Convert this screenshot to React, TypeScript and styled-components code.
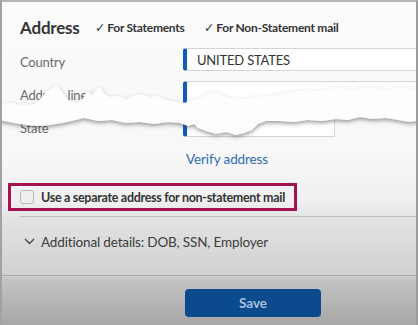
import React from "react";
import styled, { createGlobalStyle } from "styled-components";

const Global = createGlobalStyle`
  html, body { margin: 0; padding: 0; }
  body { font-family: Lato, "Open Sans", "DejaVu Sans", sans-serif; background: #a6a6a6; }
  * { box-sizing: border-box; }
`;

const Frame = styled.div`
  position: relative;
  width: 418px;
  height: 325px;
  overflow: hidden;
  border-left: 2px solid #a2a2a2;
  border-right: 2px solid #9c9c9c;
  border-top: 2px solid #b4b4b4;
  background: linear-gradient(
    to bottom,
    #fbfbfc 0px,
    #f8f8f9 150px,
    #efeff0 200px,
    #e3e3e3 216px,
    #d0d0d0 274px,
    #c4c4c4 277px,
    #a5a5a5 325px
  );
  display: flex;
  flex-direction: column;
  padding-top: 14px;
`;

const Header = styled.div`
  display: flex;
  align-items: center;
  height: 22px;
  padding-left: 18px;
`;

const Title = styled.h2`
  margin: 0;
  font-size: 17px;
  font-weight: 700;
  color: #353535;
  width: 75px;
  letter-spacing: -0.2px;
`;

const Tag = styled.span<{ $w: number }>`
  font-size: 12px;
  font-weight: 700;
  color: #333;
  width: ${(p) => p.$w}px;
  white-space: nowrap;
  letter-spacing: -0.25px;
`;

const Check = styled.span`
  font-weight: 400;
  font-family: "DejaVu Sans", sans-serif;
  font-size: 12.5px;
  margin-right: 2px;
`;

const Form = styled.div`
  display: grid;
  grid-template-columns: 163px 1fr;
  row-gap: 10px;
  margin-top: 10px;
  padding-left: 18px;
`;

const Label = styled.div`
  font-size: 13px;
  color: #6a6a6a;
  display: flex;
  align-items: center;
  padding-top: 4px;
  height: 23px;
  letter-spacing: -0.2px;
`;

const Field = styled.div<{ $w?: number }>`
  height: 23px;
  width: ${(p) => (p.$w ? `${p.$w}px` : "calc(100% + 8px)")};
  background: #fff;
  border: 1px solid #d4d4d4;
  border-left: 4px solid #0b5cc0;
  border-radius: 3px 0 0 3px;
  display: flex;
  align-items: center;
  padding-left: 10px;
  font-size: 13px;
  color: #333;
  letter-spacing: -0.2px;
`;

const VerifyLink = styled.a`
  display: block;
  margin: 13px 0 0 184px;
  height: 18px;
  line-height: 18px;
  font-size: 13.5px;
  color: #2f6db3;
  text-decoration: none;
  letter-spacing: -0.1px;
`;

const Highlight = styled.label`
  display: flex;
  align-items: center;
  gap: 7px;
  margin: 15px 0 0 6px;
  width: 289px;
  height: 28px;
  border: 3px solid #a3134f;
  padding-left: 9px;
  font-size: 12.5px;
  font-weight: 700;
  color: #333;
  white-space: nowrap;
  letter-spacing: -0.3px;
`;

const Box = styled.span`
  flex: none;
  width: 14px;
  height: 14px;
  border: 1px solid #b9b9b9;
  border-radius: 3px;
  background: #eeeeee;
`;

const Divider = styled.hr<{ $left: number; $color: string; $top?: number }>`
  margin: ${(p) => p.$top ?? 0}px 0 0 ${(p) => p.$left}px;
  border: none;
  border-top: 1px solid ${(p) => p.$color};
  height: 0;
`;

const Accordion = styled.div`
  display: flex;
  align-items: center;
  gap: 6px;
  height: 58px;
  padding: 0 0 9px 22px;
  font-size: 13.5px;
  color: #3d3d3d;
  letter-spacing: -0.15px;
`;

const Footer = styled.div`
  padding: 13px 0 0 183px;
`;

const SaveButton = styled.button`
  width: 136px;
  height: 28px;
  border: none;
  border-radius: 4px;
  background: #0b4a8c;
  color: #a9c0db;
  font-family: Lato, "Open Sans", sans-serif;
  font-size: 13.5px;
  font-weight: 700;
`;

const Redaction = styled.svg`
  position: absolute;
  left: -2px;
  top: -2px;
  width: 418px;
  height: 325px;
  pointer-events: none;
`;

export default function App() {
  return (
    <>
      <Global />
      <Frame>
        <Header>
          <Title>Address</Title>
          <Tag $w={109}>
            <Check>✓</Check>For Statements
          </Tag>
          <Tag $w={150}>
            <Check>✓</Check>For Non-Statement mail
          </Tag>
        </Header>
        <Form>
          <Label>Country</Label>
          <Field>UNITED STATES</Field>
          <Label>Address line</Label>
          <Field />
          <Label>State</Label>
          <Field $w={152} />
        </Form>
        <VerifyLink href="#">Verify address</VerifyLink>
        <Highlight>
          <Box />
          Use a separate address for non-statement mail
        </Highlight>
        <Divider $left={18} $color="#bdbdbd" $top={5} />
        <Accordion>
          <svg width="11" height="7" viewBox="0 0 11 7">
            <path d="M1 1 L5.5 5.5 L10 1" fill="none" stroke="#444" strokeWidth="1.3" />
          </svg>
          Additional details: DOB, SSN, Employer
        </Accordion>
        <Divider $left={0} $color="#a9a9a9" />
        <Footer>
          <SaveButton>Save</SaveButton>
        </Footer>
        <Redaction viewBox="0 0 418 325">
          <defs>
            <filter id="torn" x="-5%" y="-30%" width="110%" height="160%">
              <feDropShadow dx="0" dy="2" stdDeviation="2" floodColor="#444" floodOpacity="0.55" />
            </filter>
          </defs>
          <path
            filter="url(#torn)"
            fill="#fdfdfd"
            d="M-4 104 L10 103 L22 105 L34 104 L40 99 L46 92 L52 88 L57 85 L61 90 L66 97 L69 101 L76 103 L83 99 L87 91 L92 95 L96 89 L100 87 L104 93 L110 97 L118 96 L126 99 L134 96 L142 94 L150 97 L158 96 L166 100 L176 102 L184 103 L192 100 L200 98 L208 94 L215 91 L222 95 L232 98 L244 99 L256 97 L268 96 L280 94 L292 92 L304 90 L316 91 L328 89 L340 88 L352 90 L364 87 L376 88 L388 90 L400 87 L412 89 L422 88 L422 120 L410 122 L398 120 L386 118 L372 119 L360 117 L348 120 L336 119 L322 121 L308 120 L294 122 L280 121 L266 121 L258 124 L252 130 L244 133 L236 135 L226 132 L216 134 L206 131 L198 128 L194 124 L188 126 L180 123 L168 122 L154 124 L140 122 L126 123 L112 120 L98 121 L84 118 L72 121 L62 123 L50 125 L38 126 L26 125 L14 123 L4 121 L-4 120 Z"
          />
        </Redaction>
      </Frame>
    </>
  );
}
